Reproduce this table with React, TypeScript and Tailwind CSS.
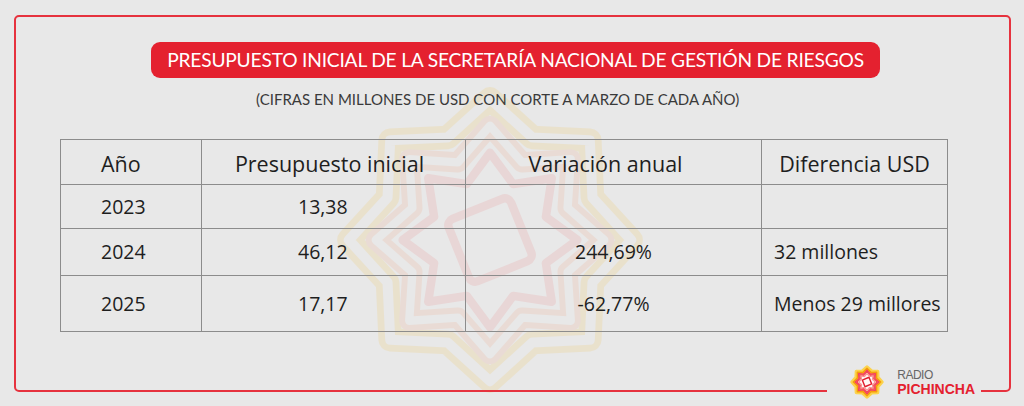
import React from "react";

const rows = [
  { year: "2023", budget: "13,38", change: "", diff: "", h: "h-[44px]" },
  { year: "2024", budget: "46,12", change: "244,69%", diff: "32 millones", h: "h-[47px]" },
  { year: "2025", budget: "17,17", change: "-62,77%", diff: "Menos 29 millores", h: "h-[56px]" },
];

// 8-point star polygon, centred on 0,0
const star = (R: number, r: number) =>
  Array.from({ length: 16 }, (_, i) => {
    const a = ((-90 + i * 22.5) * Math.PI) / 180;
    const d = i % 2 ? r : R;
    return `${(Math.cos(a) * d).toFixed(2)},${(Math.sin(a) * d).toFixed(2)}`;
  }).join(" ");

const Watermark = () => (
  <svg viewBox="-100 -100 200 200" className="w-full h-full">
    <g fill="none" strokeLinejoin="round">
      <polygon points={star(84, 66)} stroke="#f1c24a" strokeWidth="14" />
      <polygon points={star(84, 66)} stroke="#e8e8e8" strokeWidth="6" />
      <polygon points={star(68, 50)} stroke="#f0a07a" strokeWidth="12" />
      <polygon points={star(68, 50)} stroke="#e8e8e8" strokeWidth="5" />
      <polygon points={star(52, 36)} stroke="#ec8080" strokeWidth="5" />
      <rect x="-20" y="-20" width="40" height="40" rx="4" transform="rotate(-22)" stroke="#ec8080" strokeWidth="5" />
    </g>
  </svg>
);

const Logo = () => (
  <svg viewBox="-100 -100 200 200" className="w-[36px] h-[36px]">
    <g strokeLinejoin="round">
      <polygon points={star(84, 66)} fill="#fde68a" stroke="#fcd34d" strokeWidth="18" />
      <polygon points={star(76, 58)} fill="#fbbf24" stroke="#f59e0b" strokeWidth="8" />
      <polygon points={star(66, 48)} fill="#fb7185" stroke="#f43f5e" strokeWidth="7" />
      <polygon points={star(56, 40)} fill="#fecdd3" stroke="#ef4444" strokeWidth="5" />
      <polygon points={star(46, 32)} fill="#fff7f5" stroke="#f87171" strokeWidth="4" />
      <rect x="-20" y="-20" width="40" height="40" rx="3" transform="rotate(-22)" fill="none" stroke="#e11d2e" strokeWidth="8" />
    </g>
  </svg>
);

export default function App() {
  return (
    <div className="relative w-[1024px] h-[406px] overflow-hidden bg-[#e8e8e8] pt-[15px] pl-[14px] font-['Open_Sans',sans-serif] text-[#1e1e1e]">
      <div className="absolute left-[322px] top-[72px] w-[336px] h-[336px] opacity-[0.17]">
        <Watermark />
      </div>

      <div className="relative w-[997px] h-[377px] rounded-[5px] border-2 border-[#e6323e]">
        <div className="ml-[135px] mt-[25px] flex h-[36px] w-[729px] items-center justify-center rounded-[9px] bg-[#e4212f]">
          <span className="whitespace-nowrap font-['Lato',sans-serif] text-[19.2px] leading-none tracking-[-0.2px] text-white">
            PRESUPUESTO INICIAL DE LA SECRETARÍA NACIONAL DE GESTIÓN DE RIESGOS
          </span>
        </div>

        <p className="ml-[240px] mt-[11px] whitespace-nowrap font-['Lato',sans-serif] text-[15px] leading-[20px] text-[#3a3a3a]">
          (CIFRAS EN MILLONES DE USD CON CORTE A MARZO DE CADA AÑO)
        </p>

        <table className="relative ml-[44px] mt-[30px] border-collapse text-[19.5px] leading-none">
          <thead>
            <tr className="h-[45px] text-[21.5px]">
              <th className="w-[141px] border border-[#8c8c8c] pl-[40px] pt-[3px] text-left font-normal">Año</th>
              <th className="w-[264px] border border-[#8c8c8c] pt-[3px] pr-[8px] font-normal">Presupuesto inicial</th>
              <th className="w-[296px] border border-[#8c8c8c] pt-[3px] pr-[16px] font-normal">Variación anual</th>
              <th className="w-[186px] border border-[#8c8c8c] pt-[3px] font-normal">Diferencia USD</th>
            </tr>
          </thead>
          <tbody>
            {rows.map((r) => (
              <tr key={r.year} className={r.h}>
                <td className="border border-[#8c8c8c] pl-[40px]">{r.year}</td>
                <td className="border border-[#8c8c8c] pl-[96px]">{r.budget}</td>
                <td className="border border-[#8c8c8c] text-center">{r.change}</td>
                <td className="border border-[#8c8c8c] pl-[12px] whitespace-nowrap">{r.diff}</td>
              </tr>
            ))}
          </tbody>
        </table>

        <div className="absolute right-[28px] bottom-[-10px] flex items-center gap-[12px] bg-[#e8e8e8] pl-[22px] pr-[6px] font-['Liberation_Sans',sans-serif]">
          <Logo />
          <div className="flex flex-col">
            <span className="text-[12px] leading-[13px] tracking-[-0.5px] text-[#666]">RADIO</span>
            <span className="text-[14px] font-bold leading-[14px] text-[#e4212f]">PICHINCHA</span>
          </div>
        </div>
      </div>
    </div>
  );
}
